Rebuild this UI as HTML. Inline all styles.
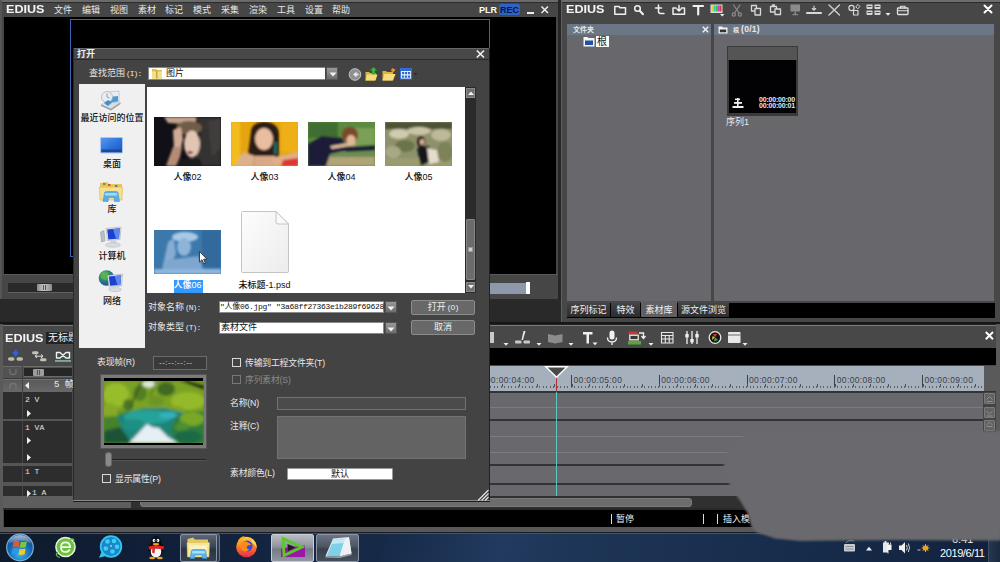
<!DOCTYPE html>
<html lang="zh-CN">
<head>
<meta charset="utf-8">
<title>EDIUS</title>
<style>
*{box-sizing:border-box;margin:0;padding:0}
html,body{width:1000px;height:562px;overflow:hidden;background:#3a3a3a}
body{position:relative;font-family:"Liberation Sans","Noto Sans CJK SC",sans-serif;font-size:9px;color:#e8e8e8;line-height:1}
.a{position:absolute}
.t{position:absolute;white-space:nowrap}
svg{position:absolute;overflow:visible}
.logo{position:absolute;font-weight:bold;font-size:10.5px;color:#f4f4f4;letter-spacing:0;transform-origin:0 0;transform:scaleX(1.2)}
.pl{text-align:center;color:#111;font-size:9px;font-weight:500}
.fl{text-align:center;color:#111;font-size:9px;font-weight:500}
.btn{background:#686868;border:1px solid #8c8c8c;border-radius:2px;text-align:center;font-size:9px;line-height:13px;color:#f0f0f0}
.cb{width:9px;height:9px;border:1px solid #d8d8d8;background:#434343}
.mono{font-family:"Liberation Mono","Noto Sans CJK SC",monospace;font-size:8px;color:#e0e0e0}
.tbn{width:11px;height:11px;background:#626262;border:1px solid #7c7c7c;border-radius:1px}
.tab{height:14px;background:linear-gradient(#444,#2c2c2c);font-size:9px;line-height:14px;text-align:center;color:#f0f0f0;white-space:nowrap}
.m{font-family:"Liberation Mono",monospace;font-size:8px;letter-spacing:-1px;margin-left:1px}
</style>
</head>
<body>

<!-- ================= PLAYER WINDOW ================= -->
<div class="a" id="player" style="left:0;top:0;width:558px;height:299px;background:#464646">
  <div class="a" style="left:0;top:0;width:558px;height:2px;background:#6a6a6a"></div><div class="a" style="left:0;top:2px;width:558px;height:1px;background:#2c2c2c"></div>
  <div class="a" style="left:0;top:0;width:2px;height:300px;background:#555"></div>
  <div class="a" style="left:4px;top:17px;width:552px;height:257px;background:#000"></div>
  <div class="a" style="left:70px;top:19px;width:420px;height:238px;border:1.5px solid #4060b4"></div>
  <div class="logo" style="left:6px;top:4px">EDIUS</div>
  <div class="t" style="left:54px;top:5.5px;font-size:9px;word-spacing:0">文件</div>
  <div class="t" style="left:82px;top:5.5px">编辑</div>
  <div class="t" style="left:110px;top:5.5px">视图</div>
  <div class="t" style="left:138px;top:5.5px">素材</div>
  <div class="t" style="left:165px;top:5.5px">标记</div>
  <div class="t" style="left:193px;top:5.5px">模式</div>
  <div class="t" style="left:221px;top:5.5px">采集</div>
  <div class="t" style="left:249px;top:5.5px">渲染</div>
  <div class="t" style="left:277px;top:5.5px">工具</div>
  <div class="t" style="left:305px;top:5.5px">设置</div>
  <div class="t" style="left:332px;top:5.5px">帮助</div>
  <div class="t" style="left:479px;top:5.5px;font-weight:bold;font-size:9px;color:#fff">PLR</div>
  <div class="a" style="left:499px;top:4px;width:21px;height:11px;background:#2e62c8;border-radius:2px"></div>
  <div class="t" style="left:500px;top:5.5px;font-weight:bold;font-size:9px;color:#0a1640">REC</div>
  <div class="a" style="left:527px;top:12px;width:7px;height:2px;background:#eee"></div>
  <svg style="left:541px;top:6px" width="8" height="8"><path d="M0.5 0.5L7 7M7 0.5L0.5 7" stroke="#eee" stroke-width="1.5" fill="none"/></svg>
  <!-- lower controls -->
  <div class="a" style="left:3px;top:274px;width:556px;height:25px;background:#464646;border-top:1px solid #5a5a5a"></div>
  <div class="a" style="left:8px;top:283px;width:480px;height:10px;background:#2a2a2a;border-bottom:1px solid #606060"></div>
  <div class="a" style="left:37px;top:284px;width:15px;height:7px;background:linear-gradient(90deg,#8a8a8a,#c8c8c8 45%,#8a8a8a);border-radius:1px"></div>
  <div class="a" style="left:43px;top:285px;width:1px;height:5px;background:#555"></div><div class="a" style="left:45px;top:285px;width:1px;height:5px;background:#555"></div>
  <div class="a" style="left:490px;top:283px;width:36px;height:11px;background:#8d99ab"></div>
  <div class="a" style="left:526px;top:282px;width:4px;height:12px;background:#fff"></div>
</div>
<div class="a" style="left:0;top:299px;width:561px;height:26px;background:#292929"></div><div class="a" style="left:0;top:322px;width:1000px;height:3px;background:#161616"></div><div class="a" style="left:558px;top:0;width:3px;height:300px;background:#262626"></div>

<!-- ================= BIN WINDOW ================= -->
<div class="a" id="bin" style="left:561px;top:0;width:439px;height:322px;background:#474747">
  <div class="a" style="left:0;top:0;width:439px;height:2px;background:#6e6e6e"></div><div class="a" style="left:0;top:2px;width:439px;height:1px;background:#2c2c2c"></div><div class="a" style="left:0;top:0;width:1px;height:322px;background:#606060"></div>
  <div class="logo" style="left:5px;top:4px">EDIUS</div>

  <!-- folder panel -->
  <div class="a" style="left:6px;top:24px;width:144px;height:11px;background:#6b7686"></div>
  <div class="t" style="left:12px;top:26px;font-size:7px;font-weight:bold">文件夹</div>
  <div class="a" style="left:6px;top:35px;width:144px;height:266px;background:#68676c"></div>
  <div class="a" style="left:35px;top:36px;width:13px;height:11px;background:#fff"></div>
  <div class="t" style="left:36px;top:37px;color:#111;font-size:10px">根</div>
  <!-- bin panel -->
  <div class="a" style="left:153px;top:24px;width:280px;height:11px;background:#6b7686"></div>
  <div class="t" style="left:172px;top:27px;font-size:6px;font-weight:bold">根</div><div class="t" style="left:180px;top:25px;font-size:8.5px;font-weight:bold;letter-spacing:0.3px">(0/1)</div>
  <div class="a" style="left:153px;top:35px;width:280px;height:266px;background:#68676c"></div>
  <div class="a" style="left:166px;top:46px;width:71px;height:70px;background:#3a3a3a"></div>
  <div class="a" style="left:167px;top:47px;width:69px;height:13px;background:#555"></div>
  <div class="a" style="left:168px;top:60px;width:67px;height:53px;background:#020204"></div>
  <div class="t" style="left:198px;top:97px;font-size:7px;color:#e8e8e8;line-height:5.5px;font-weight:bold;letter-spacing:-0.2px">00:00:00:00<br>00:00:00:01</div>
  <div class="t" style="left:165px;top:118px;font-size:9px">序列1</div>
  <!-- tabs -->
  <div class="a" style="left:6px;top:303px;width:428px;height:15px;background:#000"></div>
  <div class="a tab" style="left:6px;top:303px;width:43px">序列标记</div>
  <div class="a tab" style="left:50px;top:303px;width:29px">特效</div>
  <div class="a tab" style="left:80px;top:301px;width:36px;height:16px;background:#606062;padding-top:2px">素材库</div>
  <div class="a tab" style="left:117px;top:303px;width:51px">源文件浏览</div>
  <!-- bin toolbar icons (coords relative to bin window: global x-561) -->
  <svg style="left:52px;top:4px" width="380" height="16" viewBox="613 4 380 16" fill="none" stroke="#f0f0f0" stroke-width="1.500" stroke-linejoin="round" stroke-linecap="round">
    <path d="M614.800 6.500L619 6.500L620 7.800L625.500 7.800L625.500 14.200L614.800 14.200Z"/>
    <circle cx="637.500" cy="8.500" r="2.800"/><path d="M639.800 10.800L643 14.200" stroke-width="2"/>
    <path d="M658.500 5L658.500 11.500Q658.500 13.500 660.500 13.500L664 13.500M655.500 8L661.500 8"/>
    <path d="M673 8L673 14.200L684.500 14.200L684.500 8L681.500 8M673 8L676 8M679 5.500L679 11M677 9L679 11L681 9" />
    <path d="M693.500 6L703 6M698.200 6L698.200 14.500" stroke-width="2.200"/>
    <g stroke="none"><rect x="710.500" y="4.500" width="12" height="8.500" fill="#ddd"/><rect x="711.500" y="5.500" width="2" height="6" fill="#d8d838"/><rect x="713.500" y="5.500" width="2" height="6" fill="#38c8c8"/><rect x="715.500" y="5.500" width="2" height="6" fill="#38c838"/><rect x="717.500" y="5.500" width="2" height="6" fill="#c838c8"/><rect x="719.500" y="5.500" width="2" height="6" fill="#d03838"/><path d="M720 14L724.500 14L722.200 16.500Z" fill="#f0f0f0"/></g>
    <g stroke="#8c8c8c" stroke-width="1.200"><path d="M733.500 5L739 13M740 5L734.500 13"/><circle cx="733.800" cy="14.500" r="1.600"/><circle cx="739.800" cy="14.500" r="1.600"/></g>
    <g stroke="#d8d8d8" stroke-width="1.300"><path d="M751.500 5.500L756.500 5.500L756.500 11L751.500 11Z"/><path d="M755 8.500L760.500 8.500L760.500 15L755 15Z" fill="#474747"/></g>
    <g stroke="#d8d8d8" stroke-width="1.300"><path d="M770.500 6.500L776.500 6.500L776.500 12L770.500 12ZM772.500 5L774.500 5"/><path d="M775 9L780.500 9L780.500 14.500L775 14.500Z" fill="#474747"/></g>
    <g stroke="none" fill="#8a8a8a"><rect x="790.500" y="4.500" width="9.500" height="7"/><rect x="794.500" y="11.500" width="1.500" height="2.500"/><rect x="792.500" y="14" width="5.500" height="1.200"/></g>
    <g stroke="#d8d8d8"><path d="M807 13L821 13" stroke-width="2.200"/><path d="M814 6L814 10M812.300 8.500L814 10.200L815.700 8.500" stroke-width="1.100"/></g>
    <path d="M829 5L839.500 15M839.500 5L829 15" stroke="#d0d0d0" stroke-width="1.400"/>
    <g stroke="#d8d8d8" stroke-width="1.200"><circle cx="851.500" cy="8" r="2.600"/><rect x="853.500" y="10.500" width="4.500" height="4.500"/><path d="M856 6.500L858 4.500L860 6.500L858 8.500Z" stroke-width="1"/></g>
    <g stroke="none" fill="#d8d8d8"><rect x="866.500" y="4.500" width="6" height="4.500" rx="0.800"/><rect x="874.500" y="4.500" width="6" height="4.500" rx="0.800"/><rect x="866.500" y="10.500" width="6" height="4.500" rx="0.800"/><rect x="874.500" y="10.500" width="6" height="4.500" rx="0.800"/><path d="M885.500 13L890.500 13L888 15.800Z" fill="#f0f0f0"/></g>
    <g stroke="none" fill="#4a4a4a"><rect x="867.500" y="6" width="4" height="1"/><rect x="875.500" y="6" width="4" height="1"/><rect x="867.500" y="12" width="4" height="1"/><rect x="875.500" y="12" width="4" height="1"/></g>
    <g stroke="#e0e0e0" stroke-width="1.300"><rect x="897.500" y="8" width="10.500" height="6.500" rx="0.800"/><path d="M900.500 8L900.500 6.300L905 6.300L905 8M897.500 10.800L908 10.800" stroke-width="1.100"/></g>
    <path d="M984.500 5.500L991.500 12.500M991.500 5.500L984.500 12.500" stroke="#fff" stroke-width="2"/>
  </svg>
  <svg style="left:141px;top:26px" width="7" height="7" viewBox="0 0 7 7"><path d="M0.800 0.800L6.200 6.200M6.200 0.800L0.800 6.200" stroke="#f0f0f0" stroke-width="1.500"/></svg>
  <svg style="left:22px;top:36px" width="12" height="11" viewBox="0 0 12 11"><path d="M0.500 1L4.500 1L5.500 2L11.500 2L11.500 10.500L0.500 10.500Z" fill="#f4f4f4"/><rect x="2" y="4.500" width="8" height="4.500" fill="#1f4fa8"/></svg>
  <svg style="left:157px;top:26px" width="10" height="8" viewBox="0 0 10 8"><path d="M0.500 0.500L4 0.500L5 1.500L9.500 1.500L9.500 7.500L0.500 7.500Z" fill="#f4f4f4"/><rect x="1.800" y="3.500" width="6.400" height="2.800" fill="#333"/></svg>
  <svg style="left:171px;top:98px" width="12" height="11" viewBox="0 0 12 11" fill="#f0f0f0"><rect x="3" y="0.500" width="5" height="1.600"/><rect x="5" y="0" width="1.600" height="10"/><rect x="2" y="4" width="8" height="1.800"/><rect x="0.500" y="8" width="11" height="2"/></svg>
</div>

<!-- ================= TIMELINE WINDOW ================= -->
<div class="a" id="tl" style="left:0;top:324px;width:1000px;height:208px;background:#484848">
  <div class="a" style="left:0;top:0;width:1000px;height:1px;background:#222"></div><div class="a" style="left:0;top:1px;width:1000px;height:1px;background:#7a7a7a"></div>
  <div class="a" style="left:0;top:0;width:3px;height:208px;background:#5a5a5a"></div>
  <div class="a" style="left:996px;top:0;width:4px;height:208px;background:#5a5a5a"></div>
  <div class="a" style="left:0;top:203px;width:1000px;height:5px;background:#585858"></div>
  <div class="logo" style="left:5px;top:9px">EDIUS</div>
  <div class="a" style="left:45px;top:7px;width:60px;height:14px;background:#222;border:1px solid #4a4a4a"></div>
  <div class="t" style="left:48px;top:9px;font-size:10px;color:#f0f0f0">无标题</div>
  <!-- black band -->
  <div class="a" style="left:4px;top:24px;width:992px;height:17px;background:#000"></div>
  <div class="a" style="left:4px;top:24px;width:70px;height:17px;background:#484848"></div>
  <!-- header rows -->
  <div class="a" style="left:3px;top:42px;width:69px;height:13px;background:#525252;border-top:1px solid #6c6c6c"></div>
  <div class="a" style="left:24px;top:44px;width:48px;height:9px;background:#262626;border-bottom:1px solid #6a6a6a"></div>
  <div class="a" style="left:33px;top:45px;width:11px;height:7px;background:#9c9c9c;border-radius:1px"></div>
  <div class="a" style="left:37px;top:46px;width:1px;height:5px;background:#555"></div><div class="a" style="left:39px;top:46px;width:1px;height:5px;background:#555"></div>
  <div class="a" style="left:3px;top:55px;width:69px;height:13px;background:linear-gradient(#5a5a5a,#686868);border-top:1px solid #707070"></div>
  <div class="a" style="left:3px;top:54px;width:69px;height:1px;background:#3a3a3a"></div>
  <div class="a" style="left:22px;top:42px;width:1px;height:26px;background:#444"></div>
  <div class="t" style="left:54px;top:57px;font-size:9px;color:#eee;font-family:'Liberation Mono','Noto Sans CJK SC',monospace">5 帧</div>
  <svg style="left:25px;top:58px" width="4" height="7"><path d="M4 0L0 3.500L4 7Z" fill="#f0f0f0"/></svg>
  <svg style="left:9px;top:44px" width="8" height="8" viewBox="0 0 8 8"><path d="M1 1L1 4Q1 6.500 4 6.500Q7 6.500 7 4L7 1" stroke="#727272" stroke-width="1.300" fill="none"/></svg>
  <svg style="left:9px;top:58px" width="8" height="8" viewBox="0 0 8 8"><path d="M1 7L1 4Q1 1.500 4 1.500Q7 1.500 7 4L7 7" stroke="#767676" stroke-width="1.300" fill="none"/></svg>
  <!-- track headers -->
  <div class="a" style="left:3px;top:68px;width:69px;height:104px;background:#2d2d2d"></div>
  <div class="a" style="left:22px;top:68px;width:1px;height:104px;background:#444"></div>
  <div class="a" style="left:3px;top:95px;width:69px;height:2px;background:#555"></div>
  <div class="a" style="left:3px;top:139px;width:69px;height:3px;background:#555"></div>
  <div class="a" style="left:3px;top:158px;width:69px;height:4px;background:#555"></div>
  <div class="a" style="left:3px;top:172px;width:69px;height:12px;background:#5e5e5e"></div>
  <div class="t mono" style="left:25px;top:72px">2 V</div>
  <div class="t mono" style="left:25px;top:100px">1 VA</div>
  <div class="t mono" style="left:25px;top:144px">1 T</div>
  <div class="t mono" style="left:32px;top:165px">1 A</div>
  <svg style="left:27px;top:166px" width="4" height="7"><path d="M0 0L4 3.500L0 7Z" fill="#f0f0f0"/></svg>
  <svg style="left:27px;top:86px" width="4" height="7"><path d="M0 0L4 3.500L0 7Z" fill="#f0f0f0"/></svg>
  <svg style="left:27px;top:113px" width="4" height="7"><path d="M0 0L4 3.500L0 7Z" fill="#f0f0f0"/></svg>
  <svg style="left:27px;top:130px" width="4" height="7"><path d="M0 0L4 3.500L0 7Z" fill="#f0f0f0"/></svg>
  <!-- ruler -->
  <div class="a" style="left:74px;top:42px;width:910px;height:26px;background:#a6b0bd"></div>
  <div class="a" style="left:984px;top:42px;width:12px;height:26px;background:#5a5a5a"></div>
  <div class="a" style="left:483.2px;top:51px;width:1px;height:11px;background:#39404a"></div><div class="t" style="left:485.8px;top:52px;font-size:8.5px;color:#39404a;letter-spacing:0.35px">00:00:04:00</div><div class="a" style="left:571.0px;top:51px;width:1px;height:11px;background:#39404a"></div><div class="t" style="left:573.5px;top:52px;font-size:8.5px;color:#39404a;letter-spacing:0.35px">00:00:05:00</div><div class="a" style="left:658.8px;top:51px;width:1px;height:11px;background:#39404a"></div><div class="t" style="left:661.2px;top:52px;font-size:8.5px;color:#39404a;letter-spacing:0.35px">00:00:06:00</div><div class="a" style="left:746.5px;top:51px;width:1px;height:11px;background:#39404a"></div><div class="t" style="left:749.0px;top:52px;font-size:8.5px;color:#39404a;letter-spacing:0.35px">00:00:07:00</div><div class="a" style="left:834.2px;top:51px;width:1px;height:11px;background:#39404a"></div><div class="t" style="left:836.8px;top:52px;font-size:8.5px;color:#39404a;letter-spacing:0.35px">00:00:08:00</div><div class="a" style="left:922.0px;top:51px;width:1px;height:11px;background:#39404a"></div><div class="t" style="left:924.5px;top:52px;font-size:8.5px;color:#39404a;letter-spacing:0.35px">00:00:09:00</div>
  <div class="a" style="left:490px;top:62px;width:494px;height:1.5px;background:repeating-linear-gradient(90deg,#5a6370 0,#5a6370 1px,transparent 1px,transparent 3.51px)"></div><div class="a" style="left:483.5px;top:60px;width:500px;height:3px;background:repeating-linear-gradient(90deg,#4a525e 0,#4a525e 1px,transparent 1px,transparent 17.55px)"></div>
  <!-- tracks -->
  <div class="a" style="left:74px;top:68px;width:922px;height:104px;background:#69686d"></div>
  <div class="a" style="left:74px;top:67px;width:922px;height:2px;background:#333"></div>
  <div class="a" style="left:74px;top:83px;width:910px;height:1px;background:#7c7c7e"></div>
  <div class="a" style="left:74px;top:95px;width:910px;height:2px;background:#333"></div>
  <div class="a" style="left:74px;top:112px;width:700px;height:1px;background:#7c7c7e"></div>
  <div class="a" style="left:74px;top:128px;width:700px;height:1px;background:#7c7c7e"></div>
  <div class="a" style="left:74px;top:140px;width:680px;height:2px;background:#333"></div>
  <div class="a" style="left:74px;top:159px;width:680px;height:2px;background:#333"></div>
  <!-- right track buttons -->
  <div class="a" style="left:983px;top:68px;width:13px;height:42px;background:#444"></div>
  <div class="a tbn" style="left:984px;top:69px"></div>
  <div class="a tbn" style="left:984px;top:83px"></div>
  <div class="a tbn" style="left:984px;top:96px"></div>
  <svg style="left:986px;top:71px" width="7" height="32" viewBox="0 0 7 32" fill="none" stroke="#8e8e8e" stroke-width="1"><path d="M0.500 4.500L3.500 1.500L6.500 4.500M0.500 6.500L6.500 6.500"/><path d="M0.500 16L3.500 19L6.500 16M0.500 21L6.500 21"/><path d="M0.500 30L3.500 27L6.500 30M0.500 31.500L6.500 31.500"/></svg>
  <!-- playhead -->
  <div class="a" style="left:556px;top:68px;width:1px;height:104px;background:#58c8c0"></div>
  <div class="a" style="left:556px;top:54px;width:1px;height:14px;background:#b03030"></div>
  <svg style="left:545px;top:42px" width="23" height="12" viewBox="0 0 23 12"><path d="M0.800 0.800L22.200 0.800L11.500 11.200Z" fill="#4a4a4a" stroke="#fff" stroke-width="1.400"/></svg>
  <!-- h scrollbar -->
  <div class="a" style="left:72px;top:172px;width:924px;height:12px;background:#303030"></div><div class="a" style="left:72px;top:172px;width:59px;height:12px;background:#5e5e5e"></div>
  <div class="a" style="left:140px;top:174px;width:552px;height:9px;background:#6c6c6c;border-radius:3px;border:1px solid #7a7a7a"></div>
  <div class="a" style="left:3px;top:184px;width:993px;height:2px;background:#2a2a2a"></div>
  <!-- status -->
  <div class="a" style="left:4px;top:186px;width:992px;height:17px;background:#000"></div>
  <div class="a" style="left:611px;top:190px;width:1px;height:10px;background:#ddd"></div>
  <div class="t" style="left:616px;top:191px;font-size:9px;color:#eee">暂停</div>
  <div class="a" style="left:703px;top:190px;width:1px;height:10px;background:#ddd"></div>
  <div class="a" style="left:717px;top:190px;width:1px;height:10px;background:#ddd"></div>
  <div class="t" style="left:723px;top:191px;font-size:9px;color:#eee">插入模</div>
  <!-- toolbar icons -->
  <svg style="left:0;top:0" width="1000" height="48" viewBox="0 324 1000 48" fill="none">
    <g transform="translate(0,-1.300)">
      <rect x="8" y="358.500" width="6.500" height="3.500" rx="1.700" fill="#b8bca8"/><rect x="16.500" y="358.500" width="6.500" height="3.500" rx="1.700" fill="#b8bca8"/>
      <path d="M12 353L19 353L15.500 358.500Z" fill="#2f62d8"/><rect x="14.500" y="351" width="2.200" height="3" fill="#2f62d8"/>
      <rect x="32" y="352.500" width="6.500" height="3" rx="1.500" fill="#c0c4b4"/><rect x="40" y="359.500" width="6.500" height="3" rx="1.500" fill="#c0c4b4"/>
      <path d="M35 357.500L43 357.500M41 355.800L43 357.500L41 359.200M37 355.800L35 357.500L37 359.200" stroke="#e0e0e0" stroke-width="1"/>
      <path d="M56.500 353.800L60 353.800L66 359.300L69.500 359.300L69.500 353.800L66 353.800L60 359.300L56.500 359.300Z" stroke="#f0f0f0" stroke-width="1.400" stroke-linejoin="round"/>
      <rect x="55" y="361.500" width="16" height="1.500" fill="#7fc8a8"/>
    </g>
    <g fill="#f0f0f0">
      <path d="M490 332L494 332L494 343L490 343Z" fill="#c8c8c8"/>
      <path d="M503.500 343L508.500 343L506 345.800Z"/>
      <rect x="515" y="340.500" width="6.500" height="3" rx="1" fill="#c8c8c8"/><rect x="523.500" y="340.500" width="6.500" height="3" rx="1" fill="#c8c8c8"/><path d="M523.500 331L525.500 331L523 340L521.500 340Z" fill="#e8e8e8"/>
      <path d="M536.500 343L541.500 343L539 345.800Z"/>
      <path d="M548 334L555 335.500L562.500 334L562.500 342L555 343.500L548 342Z" fill="#8c8c8c"/>
      <path d="M568.500 343L573.500 343L571 345.800Z"/>
      <path d="M583 332L592.500 332L592.500 334.500L589 334.500L589 343.500L586.500 343.500L586.500 334.500L583 334.500Z"/>
      <path d="M592.500 342.500L597.500 342.500L595 345.300Z"/>
      <rect x="609.500" y="330.500" width="5" height="9" rx="2.500"/><path d="M607.500 337.500Q607.500 342 612 342Q616.500 342 616.500 337.500M612 342L612 345" stroke="#f0f0f0" stroke-width="1.300" fill="none"/>
      <rect x="628.500" y="331.500" width="9" height="3" fill="#d03030"/><rect x="629" y="334.500" width="10" height="6" fill="#d8d8c8"/><rect x="630.500" y="336" width="7" height="3" fill="#383838"/><rect x="628" y="341" width="13" height="3.500" fill="#58a838"/>
      <path d="M639 333L643.500 333L643.500 338M641.500 336L643.500 338.500L645.500 336" stroke="#f0f0f0" stroke-width="1.300" fill="none"/>
      <path d="M648.500 343L653.500 343L651 345.800Z"/>
      <path d="M661.500 332.500L673 332.500L673 343L661.500 343ZM661.500 335.500L673 335.500M661.500 339L673 339M665.300 335.500L665.300 343M669.200 335.500L669.200 343" stroke="#e8e8e8" stroke-width="1.100" fill="none"/>
      <path d="M687 331L687 344M692 331L692 344M697 331L697 344" stroke="#f0f0f0" stroke-width="1.300"/><rect x="685.300" y="334" width="3.400" height="3.400"/><rect x="690.300" y="339" width="3.400" height="3.400"/><rect x="695.300" y="334" width="3.400" height="3.400"/>
      <circle cx="715" cy="337.500" r="5.800" fill="#141414" stroke="#e8e8e8" stroke-width="1.300"/><path d="M715 337.500L713 334L717 334Z" fill="#e03030"/><path d="M715 337.500L718 340L714 341.500Z" fill="#38b838"/><path d="M715 337.500L712 340L712.500 336Z" fill="#d8c838"/>
      <rect x="728" y="332" width="12.500" height="11" rx="0.800" fill="#e8e8e8"/><rect x="728" y="334.500" width="12.500" height="1" fill="#666"/>
      <path d="M742.500 343L747.500 343L745 345.800Z"/>
    </g>
    <path d="M985.800 332L993 339.200M993 332L985.800 339.200" stroke="#fff" stroke-width="2"/>
  </svg>
</div>

<!-- ================= TASKBAR ================= -->
<div class="a" id="tb" style="left:0;top:532px;width:1000px;height:30px;background:linear-gradient(100deg,#0f1b2b 0,#11203a 18%,#162a48 38%,#213a5e 50%,#1d3556 58%,#1a3050 70%,#152a48 85%,#11203a 100%)">
  <div class="a" style="left:0;top:0;width:1000px;height:1px;background:#1a1e24"></div>
  <div class="a" style="left:0;top:1px;width:1000px;height:1px;background:#465262"></div>
  <!-- task buttons -->
  <div class="a" style="left:183px;top:2px;width:37px;height:28px;border-radius:2px;background:linear-gradient(#3c4858,#27323f);border:1px solid #6a7686"></div>
  <div class="a" style="left:180px;top:2px;width:37px;height:28px;border-radius:2px;background:linear-gradient(#5a6676 0,#3a4656 45%,#2a3542 55%,#35414e 100%);border:1px solid #8a96a6"></div>
  <div class="a" style="left:271px;top:2px;width:43px;height:28px;border-radius:2px;background:linear-gradient(#b8bcc4 0,#8e949e 45%,#767c86 55%,#9097a2 100%);border:1px solid #c8ccd4"></div>
  <div class="a" style="left:316px;top:2px;width:43px;height:28px;border-radius:2px;background:linear-gradient(#6a7482 0,#4a5462 45%,#38424e 55%,#46505c 100%);border:1px solid #8a94a2"></div>
  <svg style="left:0;top:0" width="1000" height="30" viewBox="0 532 1000 30">
    <defs>
      <radialGradient id="orb" cx="0.5" cy="0.75" r="0.8"><stop offset="0" stop-color="#38b8f0"/><stop offset="0.5" stop-color="#1a6ab8"/><stop offset="1" stop-color="#0e3a78"/></radialGradient>
      <linearGradient id="orbh" x1="0" y1="0" x2="0" y2="1"><stop offset="0" stop-color="#fff" stop-opacity="0.65"/><stop offset="1" stop-color="#fff" stop-opacity="0.1"/></linearGradient>
      <filter id="tbb" x="-10%" y="-10%" width="120%" height="120%"><feGaussianBlur stdDeviation="0.5"/></filter>
      <linearGradient id="fx" x1="0" y1="0" x2="0" y2="1"><stop offset="0" stop-color="#ffd23a"/><stop offset="0.5" stop-color="#ff7a1a"/><stop offset="1" stop-color="#e0285a"/></linearGradient>
    </defs>
    <g filter="url(#tbb)">
    <!-- start orb -->
    <circle cx="20" cy="547.500" r="13.300" fill="url(#orb)" stroke="#7ab0dc" stroke-width="1.200"/>
    <path d="M8 544Q20 537 32 544Q30 535.500 20 535Q10 535.500 8 544Z" fill="url(#orbh)"/>
    <path d="M13.500 541.500Q16.500 540 19.500 541.200L18.500 547Q15.800 546 12.800 547.300Z" fill="#e8582a"/>
    <path d="M20.800 541.600Q23.800 542.800 26.800 541.200L25.800 547Q23 548.400 19.800 547.300Z" fill="#7fc832"/>
    <path d="M12.500 548.600Q15.500 547.300 18.300 548.400L17.300 554.200Q14.500 553.200 11.600 554.500Z" fill="#2a9ae8"/>
    <path d="M19.600 548.800Q22.700 550 25.600 548.500L24.600 554.200Q21.600 555.600 18.600 554.500Z" fill="#f8c828"/>
    <!-- 360 browser -->
    <circle cx="65.500" cy="547" r="9.600" fill="#6cc23e" stroke="#e6f6dc" stroke-width="1.500"/>
    <path d="M58 552Q54 556 60 557.500" stroke="#6cc23e" stroke-width="1.200" fill="none"/><path d="M70 539.500Q75 537.500 73.500 542" stroke="#6cc23e" stroke-width="1.200" fill="none"/>
    <path d="M69.800 549.500Q68.300 552 65.300 552Q61.200 552 61 547.200L70.200 547.200Q70 542.300 65.500 542.300Q61.500 542.300 61 546" stroke="#f4fbef" stroke-width="1.700" fill="none"/>
    <!-- qq player -->
    <circle cx="111" cy="546.500" r="10.300" fill="#1a86c8" stroke="#35c4f0" stroke-width="1.800"/>
    <path d="M101.500 552L99 557.800L106 556Z" fill="#35c4f0"/>
    <circle cx="107.500" cy="541.500" r="2.300" fill="#3ad0f4"/><circle cx="114" cy="541" r="2.300" fill="#3ad0f4"/><circle cx="117" cy="546.800" r="2.300" fill="#3ad0f4"/><circle cx="112.500" cy="551.500" r="2.300" fill="#3ad0f4"/><circle cx="105.800" cy="548.500" r="2.300" fill="#3ad0f4"/><circle cx="111" cy="546" r="0.900" fill="#9fe6fa"/>
    <!-- qq penguin -->
    <ellipse cx="156" cy="549" rx="7.600" ry="8.500" fill="#0c0c0c"/>
    <ellipse cx="156" cy="541.500" rx="5.200" ry="5" fill="#0c0c0c"/>
    <ellipse cx="156" cy="551.500" rx="5.300" ry="6" fill="#f6f6f6"/>
    <ellipse cx="154" cy="540.500" rx="1.300" ry="1.700" fill="#fff"/><ellipse cx="158" cy="540.500" rx="1.300" ry="1.700" fill="#fff"/>
    <circle cx="154.300" cy="540.800" r="0.550" fill="#111"/><circle cx="157.700" cy="540.800" r="0.550" fill="#111"/>
    <ellipse cx="156" cy="544.200" rx="3.200" ry="1.100" fill="#f0a020"/>
    <path d="M148.500 546.500Q156 544.500 164 546.500L163.500 549.500Q156 548 149 549.500Z" fill="#e02828"/>
    <path d="M152.500 548L155 548L154.500 553.500L152 552.500Z" fill="#e02828"/>
    <ellipse cx="152.200" cy="558" rx="3" ry="1.200" fill="#f0a020"/><ellipse cx="159.800" cy="558" rx="3" ry="1.200" fill="#f0a020"/>
    <!-- explorer -->
    <path d="M187.500 539L193 537.500L195 539.500L208 539.500L208 556L187.500 556Z" fill="#e4c860"/>
    <path d="M187 542.500L209.500 542.500L209 557L187.500 557Z" fill="#f7e69a" stroke="#d8b858" stroke-width="0.500"/>
    <path d="M189.500 545.500L207 545.500L207 549L189.500 549Z" fill="#fbf2c4"/>
    <path d="M190 558.500L191.500 550.500Q192 549.500 193.500 549.500L203.500 549.500Q205 549.500 205.500 550.500L207 558.500L202.500 558.500L202 555L195 555L194.500 558.500Z" fill="#5ab4ea" stroke="#3a8cc8" stroke-width="0.500"/>
    <path d="M192.300 551L204.700 551L205.100 553.500L191.900 553.500Z" fill="#a8dcf8"/>
    <!-- firefox -->
    <circle cx="246.500" cy="547" r="10.300" fill="url(#fx)"/>
    <path d="M238 541Q240 536.500 245 536Q242 538.500 243.500 541Z" fill="#ffb02a"/>
    <circle cx="247" cy="546" r="5.600" fill="#3a4ad8"/>
    <path d="M241 543Q244.500 540 248 542.500Q250.500 543 251 545Q248 544.500 247 546.500Q246 549 249.500 549.500Q246 553 242.500 550.500Q239.500 547.500 241 543Z" fill="#ff8a1c"/>
    <path d="M251 538.500Q257 542 256.500 548Q255 543.500 251.500 542.500Z" fill="#ffd84a"/>
    <!-- edius -->
    <path d="M281 548.500L305 545.500L305 557L281 557Z" fill="#9a18a8"/>
    <path d="M283 538.500L302 547L284 555.500Z" fill="none" stroke="#5ac828" stroke-width="2.800" stroke-linejoin="miter"/>
    <path d="M287.500 544L295.500 547.200L287.800 551Z" fill="#1c1c1c"/>
    <!-- notepad-like -->
    <path d="M325.500 556L333 538.500L349 537L351.500 553.500Z" fill="#dfe4ea"/>
    <path d="M327 555.500L333.500 540L345 539L339.500 556.500Z" fill="#7ed0e8"/>
    <path d="M333.500 540L345 539L343.500 543L332 544Z" fill="#b8ecf8"/>
    <path d="M345 539L349 537.500L351.500 553.500L339.500 556.500Z" fill="#eef0f2"/>
    <path d="M325.500 556L339.500 556.500L351.500 553.500L351.500 555L339.500 558L325.500 557.500Z" fill="#9aa4ae"/>
    <!-- tray -->
    <rect x="844" y="544" width="11" height="7.500" rx="1" fill="#c8ccd0"/><path d="M846 543Q848 539.500 854 541" stroke="#8a9098" stroke-width="1" fill="none"/><rect x="845.500" y="546" width="8" height="1" fill="#8a9098"/><rect x="845.500" y="548.500" width="8" height="1" fill="#8a9098"/>
    <path d="M866 550.500L872 550.500L869 546.800Z" fill="#f0f0f0"/>
    <rect x="883" y="542.500" width="5" height="10" fill="#e8e8e8"/><rect x="887" y="544.500" width="4.500" height="5.500" fill="#f4f4f4"/><rect x="884.500" y="541" width="2" height="2" fill="#e8e8e8"/><path d="M888 550L888 553.500M890.500 544.500L890.500 542.500M888.500 544.500L888.500 542.500" stroke="#f0f0f0" stroke-width="0.900"/>
    <path d="M899 545.500L901.500 545.500L905 542L905 553.500L901.500 550L899 550Z" fill="#f0f0f0"/><path d="M906.500 545Q908 547.700 906.500 550.500M908.300 543.500Q910.800 547.700 908.300 552" stroke="#e8e8e8" stroke-width="0.900" fill="none"/>
    <circle cx="925.500" cy="548" r="2.600" fill="#f4a020"/><path d="M925.500 544L925.500 552M921.500 548L929.500 548M922.700 545.200L928.300 550.800M928.300 545.200L922.700 550.800" stroke="#f4a020" stroke-width="1"/><rect x="917.500" y="549.500" width="3" height="1" fill="#c8c8c8"/>
    </g>
  </svg>
  <div class="a" style="left:988px;top:2px;width:12px;height:28px;background:linear-gradient(90deg,#26384e,#1a2a40);border-left:1px solid #3e4e62"></div>
  <div class="t" style="left:940px;top:16px;font-size:11px;color:#fff;letter-spacing:-0.4px">2019/6/11</div>
  <div class="t" style="left:952px;top:2px;font-size:11px;color:#fff">6:41</div>
</div>

<!-- ================= BLOB ================= -->
<svg class="a" style="left:0;top:0" width="1000" height="562" viewBox="0 0 1000 562">
  <defs><filter id="blb" x="-5%" y="-5%" width="110%" height="110%"><feGaussianBlur stdDeviation="1.2"/></filter></defs>
  <path d="M747 431L1001 431L1001 540.500L960 540.500L900 540L840 540.500L800 541L775 538.500L757 532.500L751 526L748 514L741 502L731 488L723 468L727 453L737 443L745 435Z" fill="#6a696d" filter="url(#blb)"/>
</svg>

<!-- ================= DIALOG ================= -->
<div class="a" id="dlg" style="left:73px;top:48px;width:417px;height:454px;background:#434343;border-radius:2px 2px 0 0">
  <div class="a" style="left:0;top:0;width:417px;height:12px;background:#484848;border-top:1px solid #686868;border-radius:2px 2px 0 0"></div>
  <div class="a" style="left:0;top:11px;width:417px;height:1px;background:#2a2a2a"></div>
  <div class="a" style="left:416px;top:0;width:1px;height:454px;background:#222"></div><div class="a" style="left:0;top:0;width:1px;height:454px;background:#2a2a2a"></div>
  <div class="a" style="left:0;top:452px;width:417px;height:1px;background:#8a8a8a"></div><div class="a" style="left:0;top:453px;width:417px;height:1px;background:#1c1c1c"></div>
  <div class="t" style="left:4px;top:2px;font-weight:bold;font-size:9px;color:#f2f2f2">打开</div>
  <svg style="left:403px;top:2px" width="9" height="8"><path d="M0.8 0.5L8 7.5M8 0.5L0.8 7.5" stroke="#f4f4f4" stroke-width="1.6" fill="none"/></svg>

  <div class="t" style="left:16px;top:21px;font-size:9px;color:#e6e6e6">查找范围<span class="m">(I):</span></div>
  <div class="a" style="left:75px;top:19px;width:177px;height:13px;background:#fff;border:1px solid #888;border-right:0"></div>
  <div class="t" style="left:93px;top:21px;font-size:9px;color:#111">图片</div>
  <div class="a" style="left:253px;top:19px;width:12px;height:13px;background:linear-gradient(#9a9a9a,#6c6c6c);border:1px solid #555"></div>


  <!-- places bar -->
  <div class="a" style="left:6px;top:36px;width:66px;height:264px;background:#f0f0f0"></div>

  <!-- place icons -->
  <svg style="left:26px;top:41px" width="23" height="22" viewBox="0 0 23 22">
    <defs><filter id="bs" x="-10%" y="-10%" width="120%" height="120%"><feGaussianBlur stdDeviation="0.45"/></filter></defs>
    <g filter="url(#bs)">
    <path d="M2 15L12 19.500L21.500 13L21.500 15L12 21.500L2 17Z" fill="#9aa0a6"/>
    <path d="M2 15L11 10L21.500 13L12 19.500Z" fill="#d8dde2"/>
    <path d="M9 3L20 2L20 13L9 14Z" fill="#e8eef4" stroke="#aab4be" stroke-width="0.600"/>
    <path d="M10 8L19 7L19 12.500L10 13.500Z" fill="#4a9bd8"/>
    <circle cx="8" cy="8" r="5.500" fill="#e9edf1" stroke="#a9b2bb" stroke-width="0.800"/>
    <path d="M8 4.500L8 8L10.500 9" stroke="#7d8892" stroke-width="0.800" fill="none"/>
    <path d="M5 14L9 11L13 13.500L9 17Z" fill="#3f8fd0"/>
    </g>
  </svg>
  <svg style="left:27px;top:89px" width="23" height="17" viewBox="0 0 23 17">
    <defs><linearGradient id="dk" x1="0" y1="0" x2="1" y2="1"><stop offset="0" stop-color="#5b9bf0"/><stop offset="0.5" stop-color="#2f74dc"/><stop offset="1" stop-color="#1e56b8"/></linearGradient></defs>
    <rect x="0.500" y="0.500" width="22" height="15.500" rx="1" fill="url(#dk)" stroke="#a8c6ee" stroke-width="1" filter="url(#bs)"/>
    <rect x="1.500" y="12.500" width="20" height="2.500" fill="#1b3f86" opacity="0.800"/>
  </svg>
  <svg style="left:25px;top:132px" width="26" height="23" viewBox="0 0 26 23">
    <g filter="url(#bs)">
    <path d="M2 3L9 2L11 4L24 4L24 19L2 19Z" fill="#e9c75c"/>
    <path d="M1.500 7L24.500 7L24 20L2 20Z" fill="#f6e08e" stroke="#d8b450" stroke-width="0.600"/>
    <rect x="5" y="3" width="2.400" height="2" fill="#4aa04a"/><rect x="10" y="4" width="2.400" height="2" fill="#d85040"/><rect x="17" y="5" width="2.400" height="2" fill="#3f7fd0"/>
    <path d="M5 21.500L6.500 12.500Q7 11.500 8.500 11.500L18 11.500Q19.500 11.500 20 12.500L21.500 21.500L16.500 21.500L16 17.500L10.500 17.500L10 21.500Z" fill="#58aee6" stroke="#3b8ccc" stroke-width="0.500"/>
    <path d="M7 13L19 13L19.400 15.500L6.600 15.500Z" fill="#a6d8f6"/>
    </g>
  </svg>
  <svg style="left:26px;top:178px" width="24" height="22" viewBox="0 0 24 22">
    <g filter="url(#bs)">
    <path d="M1.500 6L5 4.500L6 15L2.500 16Z" fill="#b9bec4" stroke="#8d949b" stroke-width="0.500"/>
    <path d="M7 2.500L22 1L21 13.500L8.500 14.500Z" fill="#e6eaee" stroke="#a3abb3" stroke-width="0.600"/>
    <path d="M8.200 3.600L20.800 2.300L20 12.500L9.400 13.400Z" fill="#1b3fcf"/>
    <path d="M14 2.900L20.800 2.300L20 12.500L17 12.800Z" fill="#5f86ea"/>
    <path d="M12 14.500L17 14.200L18 17L11 17.500Z" fill="#cfd4d9"/>
    <ellipse cx="14" cy="19" rx="7.500" ry="2.200" fill="#d9dde1" stroke="#a9b0b7" stroke-width="0.500"/>
    </g>
  </svg>
  <svg style="left:24px;top:221px" width="27" height="24" viewBox="0 0 27 24">
    <defs><radialGradient id="gl" cx="0.35" cy="0.3" r="0.8"><stop offset="0" stop-color="#7fca5a"/><stop offset="0.4" stop-color="#2f8a70"/><stop offset="1" stop-color="#1a46a8"/></radialGradient></defs>
    <g filter="url(#bs)">
    <circle cx="9.500" cy="9" r="7.800" fill="url(#gl)"/>
    <path d="M3 8Q7 3 12 3Q9 7 10 11Q6 12 3 8Z" fill="#55b24a" opacity="0.800"/>
    <path d="M10.500 6.500L25.500 5L24.500 17L12 18Z" fill="#e6eaee" stroke="#a3abb3" stroke-width="0.600"/>
    <path d="M11.800 7.600L24.200 6.300L23.400 16L13.100 16.800Z" fill="#1b3fcf"/>
    <path d="M17.500 7L24.200 6.300L23.400 16L20.500 16.300Z" fill="#5f86ea"/>
    <ellipse cx="18" cy="20.500" rx="6.500" ry="2" fill="#d9dde1" stroke="#a9b0b7" stroke-width="0.500"/>
    <path d="M16 17.500L20 17.200L20.500 19.500L15.500 19.800Z" fill="#cfd4d9"/>
    </g>
  </svg>
  <div class="t pl" style="left:6px;width:66px;top:66px">最近访问的位置</div>
  <div class="t pl" style="left:6px;width:66px;top:112px">桌面</div>
  <div class="t pl" style="left:6px;width:66px;top:157px">库</div>
  <div class="t pl" style="left:6px;width:66px;top:204px">计算机</div>
  <div class="t pl" style="left:6px;width:66px;top:248.5px">网络</div>

  <!-- file list -->
  <div class="a" style="left:74px;top:39px;width:318px;height:206px;background:#fff"></div>
  <div class="a" style="left:392px;top:39px;width:11px;height:206px;background:#2b2b2b"></div>
  <div class="a" style="left:393px;top:40px;width:9px;height:10px;background:#707070;border:1px solid #8a8a8a"></div>
  <div class="a" style="left:393px;top:171px;width:9px;height:61px;background:#6c6c6c;border:1px solid #858585;border-radius:1px"></div>
  <div class="a" style="left:393px;top:234px;width:9px;height:10px;background:#707070;border:1px solid #8a8a8a"></div>


  <!-- thumbnails -->
  <svg style="left:81px;top:69px" width="67" height="49" viewBox="0 0 67 49">
    <defs><filter id="b1" x="-10%" y="-10%" width="120%" height="120%"><feGaussianBlur stdDeviation="1.3"/></filter>
    <clipPath id="c1"><rect width="67" height="49"/></clipPath></defs>
    <rect width="67" height="49" fill="#101016"/>
    <g clip-path="url(#c1)"><g filter="url(#b1)">
      <path d="M42 0L67 0L67 49L40 49L46 30L46 12Z" fill="#353132"/>
      <path d="M54 4L67 2L67 30L58 40Z" fill="#423e3e"/>
      <path d="M10 0L42 0L42 5L30 7L14 6Z" fill="#c4a28c"/>
      <ellipse cx="35" cy="11" rx="13" ry="7" fill="#705c48"/>
      <ellipse cx="38" cy="27" rx="8" ry="13.500" fill="#e2c4b2"/>
      <path d="M19 13L27 10L29 22L27 31L20 31Z" fill="#cfab96"/>
      <path d="M19 30L28 30L26 40L22 49L12 49Z" fill="#b48c76"/>
      <ellipse cx="36" cy="35.500" rx="2.800" ry="1.500" fill="#8a1c28"/>
      <path d="M28 42L46 42L48 49L24 49Z" fill="#1c1a1c"/>
    </g></g>
  </svg>
  <svg style="left:158px;top:74px" width="67" height="44" viewBox="0 0 67 44">
    <defs><clipPath id="c2"><rect width="67" height="44"/></clipPath></defs>
    <rect width="67" height="44" fill="#e6a510"/>
    <g clip-path="url(#c2)"><g filter="url(#b1)">
      <rect x="0" y="0" width="9" height="44" fill="#f2bd1c"/>
      <rect x="50" y="0" width="17" height="30" fill="#eeb012"/>
      <path d="M20 10C20 -4 48 -4 48 12L48 40L40 44L20 44L16 40Z" fill="#2b1c14"/>
      <ellipse cx="33" cy="17" rx="9" ry="11" fill="#e9bd9f"/>
      <path d="M4 44L12 30L24 34L22 44Z" fill="#dcb08c"/>
      <path d="M24 34L44 34L46 44L22 44Z" fill="#d9a987"/>
      <path d="M40 36L67 30L67 38L44 44Z" fill="#dfae8a"/>
      <path d="M52 38L67 36L67 44L50 44Z" fill="#e03434"/>
      <rect x="43" y="20" width="3" height="12" fill="#1f6a64"/>
    </g></g>
  </svg>
  <svg style="left:235px;top:74px" width="67" height="44" viewBox="0 0 67 44">
    <defs><clipPath id="c3"><rect width="67" height="44"/></clipPath></defs>
    <rect width="67" height="44" fill="#5b8a40"/>
    <g clip-path="url(#c3)"><g filter="url(#b1)">
      <rect x="0" y="0" width="30" height="16" fill="#3f6e33"/>
      <rect x="44" y="6" width="23" height="20" fill="#79a054"/>
      <rect x="16" y="34" width="51" height="10" fill="#b0a376"/>
      <rect x="20" y="30" width="47" height="5" fill="#6f8a55"/>
      <path d="M0 22L14 14L34 16L40 28L22 32L18 44L0 44Z" fill="#1b1d38"/>
      <ellipse cx="42" cy="13" rx="8" ry="8" fill="#7a4a2c"/>
      <ellipse cx="43" cy="18" rx="4.5" ry="5" fill="#e3b898"/>
      <path d="M22 24L46 20L48 23L24 27Z" fill="#e0b798"/>
      <path d="M36 25L67 23L67 28L38 30Z" fill="#1a2436"/>
    </g></g>
  </svg>
  <svg style="left:312px;top:74px" width="67" height="44" viewBox="0 0 67 44">
    <defs><clipPath id="c4"><rect width="67" height="44"/></clipPath></defs>
    <rect width="67" height="44" fill="#8f916c"/>
    <g clip-path="url(#c4)"><g filter="url(#b1)">
      <rect x="0" y="0" width="67" height="7" fill="#4d5336"/>
      <ellipse cx="14" cy="12" rx="10" ry="5" fill="#cfcab0"/>
      <ellipse cx="34" cy="9" rx="12" ry="4" fill="#c9c4a6"/>
      <ellipse cx="56" cy="13" rx="10" ry="6" fill="#bdb999"/>
      <ellipse cx="20" cy="24" rx="10" ry="6" fill="#6b7448"/>
      <ellipse cx="8" cy="30" rx="8" ry="6" fill="#a9a884"/>
      <rect x="0" y="36" width="67" height="8" fill="#9a9c6e"/>
      <ellipse cx="60" cy="30" rx="8" ry="10" fill="#7d8258"/>
      <ellipse cx="36" cy="20" rx="4" ry="6" fill="#2a1e18"/>
      <path d="M32 26L44 24L48 38L36 44L34 36Z" fill="#18161a"/>
      <path d="M42 26L52 28L54 40L44 42Z" fill="#e6dccd"/>
      <ellipse cx="37" cy="20" rx="2.2" ry="3" fill="#d9b196"/>
    </g></g>
  </svg>
  <svg style="left:81px;top:182px" width="67" height="44" viewBox="0 0 67 44">
    <defs><clipPath id="c6"><rect width="67" height="44"/></clipPath></defs>
    <rect width="67" height="44" fill="#3c79ab"/>
    <g clip-path="url(#c6)"><g filter="url(#b1)">
      <ellipse cx="31" cy="7" rx="13" ry="5" fill="#a9c9e6"/>
      <ellipse cx="30" cy="17" rx="7" ry="9" fill="#8eb4d8"/>
      <path d="M14 12L20 8L22 24L14 40L8 40Z" fill="#86acd2"/>
      <path d="M12 30L44 26L50 40L8 42Z" fill="#7ea6cf"/>
      <rect x="0" y="39" width="67" height="5" fill="#8db6dd"/>
      <rect x="48" y="0" width="19" height="38" fill="#326b9d"/>
    </g></g>
  </svg>
  <svg style="left:167px;top:162px" width="50" height="64" viewBox="0 0 50 64">
    <defs><linearGradient id="pg" x1="0" y1="0" x2="1" y2="1"><stop offset="0" stop-color="#fdfdfd"/><stop offset="1" stop-color="#ececec"/></linearGradient></defs>
    <path d="M2.5 1.500L36 1.500L48.500 14L48.500 61.500Q48.500 62.500 47.500 62.500L2.500 62.500Q1.500 62.500 1.500 61.500L1.500 2.500Q1.500 1.500 2.500 1.500Z" fill="url(#pg)" stroke="#c4c4c4" stroke-width="1"/>
    <path d="M36 1.500L36 12Q36 14 38 14L48.500 14Z" fill="#fafafa" stroke="#c4c4c4" stroke-width="1"/>
  </svg>
  <!-- cursor -->
  <svg style="left:126px;top:203px" width="9" height="14" viewBox="0 0 9 14"><path d="M0.500 0.500L0.500 11L3 8.700L4.800 12.800L6.400 12.100L4.600 8.200L8 8.200Z" fill="#fff" stroke="#222" stroke-width="0.800"/></svg>
  <div class="t fl" style="left:81px;width:67px;top:125px">人像02</div>
  <div class="t fl" style="left:158px;width:67px;top:125px">人像03</div>
  <div class="t fl" style="left:235px;width:67px;top:125px">人像04</div>
  <div class="t fl" style="left:312px;width:67px;top:125px">人像05</div>
  <div class="a" style="left:101px;top:232px;width:29px;height:13px;background:#3399ff"></div>
  <div class="t fl" style="left:81px;width:67px;top:233px;color:#fff">人像06</div>
  <div class="t fl" style="left:158px;width:67px;top:233px">未标题-1.psd</div>

  <!-- name / type rows -->
  <div class="t" style="left:75px;top:255px;font-size:9px">对象名称<span class="m">(N):</span></div>
  <div class="a" style="left:146px;top:253px;width:165px;height:12px;background:#fff;border:1px solid #888"></div>
  <div class="t" style="left:147px;top:255px;font-size:8px;color:#111;font-family:'Liberation Mono','Noto Sans CJK SC',monospace;letter-spacing:-0.3px">"人像06.jpg" "3a68ff27363e1b289f69628</div>
  <div class="a" style="left:312px;top:253px;width:12px;height:12px;background:linear-gradient(#9a9a9a,#6c6c6c);border:1px solid #555"></div>
  <div class="a btn" style="left:338px;top:252px;width:64px;height:15px">打开<span class="m">(O)</span></div>

  <div class="t" style="left:75px;top:275px;font-size:9px">对象类型<span class="m">(T):</span></div>
  <div class="a" style="left:146px;top:274px;width:165px;height:12px;background:#fff;border:1px solid #888"></div>
  <div class="t" style="left:148px;top:275px;font-size:9px;color:#111">素材文件</div>
  <div class="a" style="left:312px;top:274px;width:12px;height:12px;background:linear-gradient(#9a9a9a,#6c6c6c);border:1px solid #555"></div>
  <div class="a btn" style="left:338px;top:272px;width:64px;height:15px">取消</div>

  <!-- lower section -->
  <div class="t" style="left:24px;top:310px;font-size:8.8px;letter-spacing:-0.15px">表现帧(R)</div>
  <div class="a" style="left:80px;top:308px;width:54px;height:14px;background:#3a3a3a;border:1px solid #6a6a6a"></div>
  <div class="t" style="left:86px;top:311px;font-size:8px;color:#d4d4d4;letter-spacing:0.5px">--:--:--:--</div>
  <div class="a" style="left:28px;top:327px;width:105px;height:73px;background:#000;border:3px solid #7a7a7a;box-shadow:0 0 0 1px #555"></div>
  <svg style="left:31px;top:333px" width="100" height="62" viewBox="0 0 100 62">
    <defs><filter id="lk" x="-10%" y="-10%" width="120%" height="120%"><feGaussianBlur stdDeviation="1.600"/></filter><clipPath id="lkc"><rect width="100" height="62"/></clipPath></defs>
    <rect width="100" height="62" fill="#5f8c20"/>
    <g clip-path="url(#lkc)"><g filter="url(#lk)">
      <rect x="0" y="0" width="100" height="30" fill="#7aa324"/>
      <ellipse cx="12" cy="14" rx="13" ry="12" fill="#98bc2c"/>
      <ellipse cx="6" cy="30" rx="8" ry="8" fill="#86aa28"/>
      <ellipse cx="84" cy="20" rx="17" ry="9" fill="#94ba2a"/>
      <ellipse cx="70" cy="30" rx="12" ry="5" fill="#7ea626"/>
      <ellipse cx="45" cy="3" rx="7" ry="3.500" fill="#dfe8d4"/>
      <ellipse cx="62" cy="8" rx="9" ry="7" fill="#3f6a22"/>
      <ellipse cx="36" cy="12" rx="7" ry="8" fill="#557f24"/>
      <ellipse cx="52" cy="20" rx="8" ry="5" fill="#6a9628"/>
      <ellipse cx="24" cy="24" rx="5" ry="6" fill="#4a7622"/>
      <path d="M0 42L20 32L40 27L62 27L80 32L100 40L100 62L0 62Z" fill="#1c8478"/>
      <ellipse cx="44" cy="36" rx="24" ry="7" fill="#27a398"/>
      <ellipse cx="64" cy="34" rx="9" ry="3.500" fill="#34b0bc"/>
      <ellipse cx="30" cy="44" rx="12" ry="6" fill="#1f9084"/>
      <path d="M0 36L12 35L18 46L8 56L0 56Z" fill="#44822a"/>
      <path d="M0 50L16 46L28 62L0 62Z" fill="#1a5238"/>
      <path d="M72 36L100 30L100 62L74 62L66 50Z" fill="#2f7c3c"/>
      <ellipse cx="88" cy="38" rx="12" ry="7" fill="#7aa828"/>
      <ellipse cx="78" cy="46" rx="7" ry="5" fill="#4c9030"/>
      <ellipse cx="84" cy="56" rx="14" ry="7" fill="#1f6a44"/>
      <path d="M25 62L43 43L48 46L55 47L64 56L74 62Z" fill="#e6eef6"/>
      <path d="M38 0L29 20L27 28" stroke="#26361a" stroke-width="1.200" fill="none"/>
      <path d="M52 0L46 16" stroke="#3a5220" stroke-width="1" fill="none"/>
      <path d="M76 0L100 9L100 4L84 0Z" fill="#18220e"/>
    </g></g>
  </svg>
  <div class="a" style="left:32px;top:411px;width:101px;height:2px;background:#222;border-bottom:1px solid #555"></div>
  <div class="a" style="left:32px;top:404px;width:7px;height:15px;background:#8a8a8a;border-radius:3px;border:1px solid #666"></div>
  <div class="a cb" style="left:29px;top:426px"></div>
  <div class="t" style="left:42px;top:427px;font-size:8.8px;letter-spacing:-0.15px">显示属性(P)</div>

  <div class="a cb" style="left:159px;top:310px"></div>
  <div class="t" style="left:172px;top:311px;font-size:8.8px;letter-spacing:-0.15px">传输到工程文件夹(T)</div>
  <div class="a cb" style="left:159px;top:327px;border-color:#777"></div>
  <div class="t" style="left:172px;top:328px;font-size:8.8px;letter-spacing:-0.15px;color:#8a8a8a">序列素材(S)</div>

  <div class="t" style="left:157px;top:351px;font-size:8.8px;letter-spacing:-0.15px">名称(N)</div>
  <div class="a" style="left:204px;top:349px;width:189px;height:13px;background:#4b4b4b;border:1px solid #727272"></div>
  <div class="t" style="left:157px;top:374px;font-size:8.8px;letter-spacing:-0.15px">注释(C)</div>
  <div class="a" style="left:204px;top:368px;width:189px;height:43px;background:#636363;border:1px solid #727272"></div>
  <div class="t" style="left:157px;top:421px;font-size:8.8px;letter-spacing:-0.15px">素材颜色(L)</div>
  <div class="a" style="left:214px;top:420px;width:106px;height:12px;background:#fff;border:1px solid #999;border-radius:1px;color:#111;font-size:9px;text-align:center;line-height:11px">默认</div>
  <!-- dialog toolbar icons -->
  <svg style="left:74px;top:19px" width="20" height="14" viewBox="0 0 20 14">
    <path d="M5 2L9 2L10 3L15 3L15 11.500L5 11.500Z" fill="#e2c14e"/><path d="M5 4.500L15 4.500L15 11.500L5 11.500Z" fill="#f3e08c"/><rect x="9" y="3" width="1.500" height="8.500" fill="#c9a93c"/>
  </svg>
  <svg style="left:256px;top:24px" width="8" height="5" viewBox="0 0 8 5"><path d="M0.500 0.500L7.500 0.500L4 4.500Z" fill="#f2f2f2"/></svg>
  <svg style="left:275px;top:19px" width="14" height="14" viewBox="0 0 14 14">
    <circle cx="7" cy="7.500" r="5.800" fill="#8e8e8e" stroke="#c9c9c9" stroke-width="1"/><path d="M8.500 4.500L5 7.500L8.500 10.500Z" fill="#e6e6e6"/><rect x="8" y="6.500" width="2.500" height="2" fill="#e6e6e6"/>
  </svg>
  <svg style="left:291px;top:18px" width="15" height="16" viewBox="0 0 15 16">
    <path d="M1.500 6L5 6L6 7L12 7L11 14.500L1.500 14.500Z" fill="#d9b440"/><path d="M3 8.500L13.500 8.500L11.500 14.500L1.500 14.500Z" fill="#f4dc78"/>
    <path d="M8 8L8 4.500L6 4.500L9.500 1L13 4.500L11 4.500L11 8Z" fill="#3fb53f" stroke="#1f7f1f" stroke-width="0.500"/>
  </svg>
  <svg style="left:308px;top:18px" width="16" height="16" viewBox="0 0 16 16">
    <path d="M1.500 5L5 5L6 6L12 6L11.500 14.500L1.500 14.500Z" fill="#d9b440"/><path d="M3.500 8L14.500 8L12 14.500L1.500 14.500Z" fill="#f6de7a"/>
    <path d="M11 2L14.500 3.500L12.500 6.500L10 5Z" fill="#f08a2a"/>
  </svg>
  <svg style="left:327px;top:20px" width="18" height="12" viewBox="0 0 18 12">
    <rect x="0.500" y="0.500" width="11" height="10.500" fill="#eaf2fc" stroke="#3b78d8" stroke-width="1"/><rect x="0.500" y="0.500" width="11" height="2.500" fill="#2f6ad0"/>
    <rect x="2" y="4" width="2.200" height="2.200" fill="#2f6ad0"/><rect x="5" y="4" width="2.200" height="2.200" fill="#2f6ad0"/><rect x="8" y="4" width="2.200" height="2.200" fill="#2f6ad0"/>
    <rect x="2" y="7.500" width="2.200" height="2.200" fill="#2f6ad0"/><rect x="5" y="7.500" width="2.200" height="2.200" fill="#2f6ad0"/><rect x="8" y="7.500" width="2.200" height="2.200" fill="#2f6ad0"/>
    <path d="M13.500 5L17.500 5L15.500 7.500Z" fill="#2a2a2a"/>
  </svg>
  <svg style="left:314px;top:258px" width="8" height="5" viewBox="0 0 8 5"><path d="M0.500 0.500L7.500 0.500L4 4.500Z" fill="#f2f2f2"/></svg>
  <svg style="left:314px;top:279px" width="8" height="5" viewBox="0 0 8 5"><path d="M0.500 0.500L7.500 0.500L4 4.500Z" fill="#f2f2f2"/></svg>
  <svg style="left:395px;top:43px" width="6" height="4" viewBox="0 0 6 4"><path d="M0 4L3 0.500L6 4Z" fill="#f2f2f2"/></svg>
  <svg style="left:395px;top:237px" width="6" height="4" viewBox="0 0 6 4"><path d="M0 0L3 3.500L6 0Z" fill="#f2f2f2"/></svg>
  <div class="a" style="left:395px;top:199px;width:5px;height:5px;background:#cfcfcf;border:1px solid #9a9a9a"></div>
  <svg style="left:404px;top:441px" width="12" height="12" viewBox="0 0 12 12"><path d="M11.500 1L1 11.500M11.500 4.500L4.500 11.500M11.500 8L8 11.500" stroke="#e8e8e8" stroke-width="1.100" fill="none"/></svg>
</div>

</body>
</html>
